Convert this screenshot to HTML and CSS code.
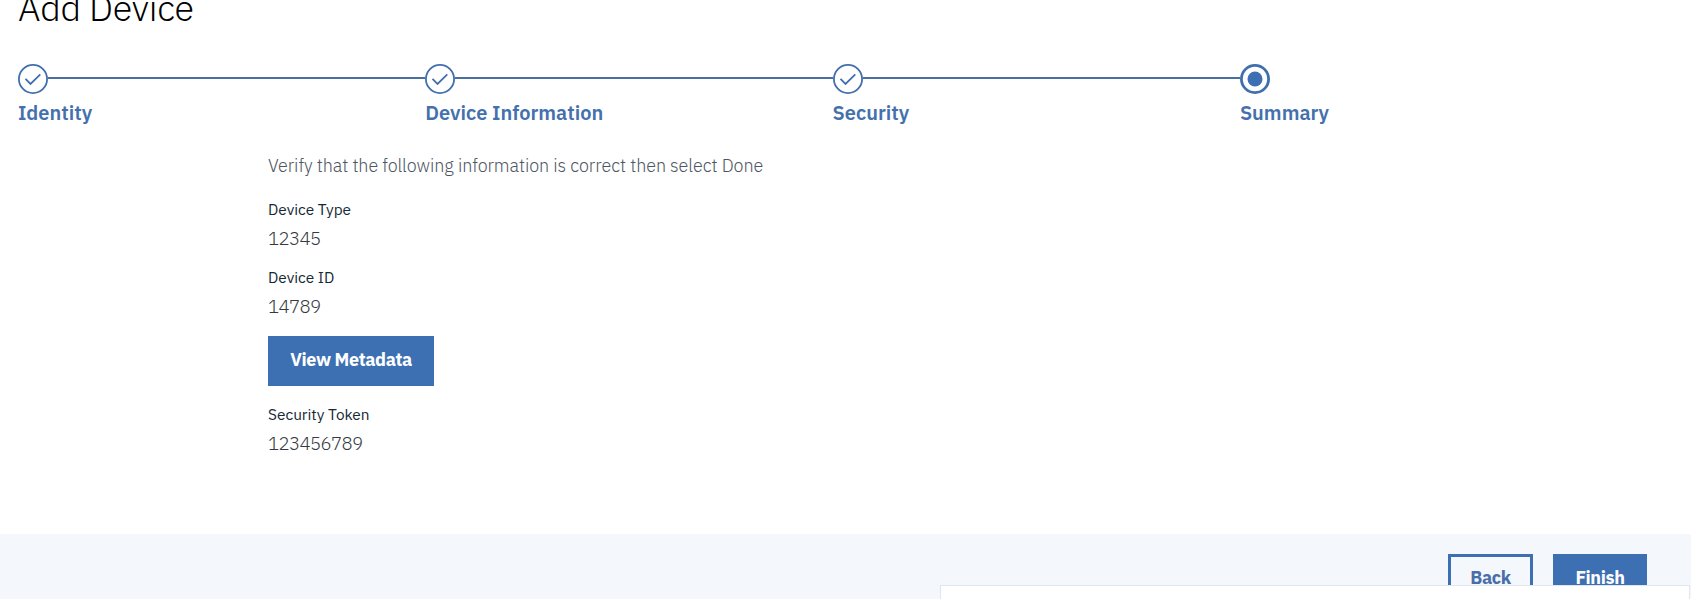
FILE: index.html
```html
<!DOCTYPE html>
<html lang="en">
<head>
<meta charset="utf-8">
<title>Add Device</title>
<link rel="stylesheet" href="styles.css">
</head>
<body>
<div class="page">
  <main class="wizard">
    <h1 class="title">Add Device</h1>
    <ol class="steps">
      <li class="step">
        <div class="track"><svg class="marker" viewBox="0 0 30 30"><circle cx="15" cy="15" r="14.1"/><path d="M7.5 14.9l5 5L22.3 10.400"/></svg></div>
        <span class="step-label">Identity</span>
      </li>
      <li class="step">
        <div class="track"><svg class="marker" viewBox="0 0 30 30"><circle cx="15" cy="15" r="14.1"/><path d="M7.5 14.9l5 5L22.3 10.400"/></svg></div>
        <span class="step-label">Device Information</span>
      </li>
      <li class="step">
        <div class="track"><svg class="marker" viewBox="0 0 30 30"><circle cx="15" cy="15" r="14.1"/><path d="M7.5 14.9l5 5L22.3 10.400"/></svg></div>
        <span class="step-label">Security</span>
      </li>
      <li class="step last">
        <div class="track"><svg class="marker current" viewBox="0 0 30 30"><circle cx="15" cy="15" r="13.6"/><circle class="dot" cx="15" cy="15" r="7.5"/></svg></div>
        <span class="step-label">Summary</span>
      </li>
    </ol>
    <section class="summary">
      <p class="intro">Verify that the following information is correct then select Done</p>
      <div class="field">
        <div class="name">Device Type</div>
        <div class="value">12345</div>
      </div>
      <div class="field">
        <div class="name">Device ID</div>
        <div class="value">14789</div>
      </div>
      <button class="btn primary metadata">View Metadata</button>
      <div class="field">
        <div class="name">Security Token</div>
        <div class="value">123456789</div>
      </div>
    </section>
  </main>
  <footer class="footer">
    <button class="btn secondary back">Back</button>
    <button class="btn primary finish">Finish</button>
  </footer>
  <div class="panel"></div>
</div>
</body>
</html>
```
FILE: styles.css
```css
* { box-sizing: border-box; margin: 0; padding: 0; }
body { font-family: "IBM Plex Sans", Roboto, "Noto Sans", sans-serif; background: #fff; color: #152935; overflow: hidden; }
.page { position: relative; height: 599px; overflow: hidden; display: flex; flex-direction: column; }
.wizard { height: 534px; flex: none; padding-left: 18px; }
.title { margin-top: -14px; font-size: 36px; line-height: 44px; font-weight: 300; color: #000; white-space: nowrap; letter-spacing: -0.3px; }
.steps { display: flex; list-style: none; margin-top: 34px; }
.step { width: 407.3px; flex: none; display: flex; flex-direction: column; }
.track { display: flex; height: 30px; }
.track::after { content: ""; flex: 1; height: 2px; margin-top: 13px; background: #4870a5; }
.last .track::after { display: none; }
.marker { width: 30px; height: 30px; flex: none; fill: none; stroke: #416fae; stroke-width: 1.8; }
.marker.current { stroke-width: 2.8; }
.marker .dot { fill: #3d70b2; stroke: none; }
.step-label { margin-top: 6px; align-self: flex-start; font-size: 20px; line-height: 26px; font-weight: 600; color: #4471ad; white-space: nowrap; }
.summary { padding: 28px 0 0 250px; }
.intro { font-size: 18px; line-height: 24px; font-weight: 300; color: #4d5661; margin-bottom: 21px; white-space: nowrap; letter-spacing: -0.08px; }
.field { height: 51px; margin-bottom: 17px; }
.name { font-size: 15.4px; line-height: 20px; margin-bottom: 5px; color: #152935; }
.value { padding-top: 1px; font-size: 18.6px; line-height: 26px; font-weight: 300; color: #353a42; letter-spacing: -0.66px; }
.btn { display: flex; justify-content: center; height: 50px; padding-top: 2px; font-family: inherit; font-size: 18px; line-height: 44px; font-weight: 700; border: 0; white-space: nowrap; letter-spacing: -0.38px; }
.primary { background: #3d70b2; color: #fff; }
.secondary { border: 3px solid #3d70b2; background: transparent; color: #486fa8; padding-top: 0; line-height: 42px; }
.metadata { width: 166px; margin: 18px 0; }
.footer { height: 65px; flex: none; background: #f4f7fb; display: flex; justify-content: flex-end; gap: 20px; padding: 20px 44px 0 0; }
.back { width: 85px; }
.finish { width: 94px; }
.panel { position: absolute; left: 940px; top: 585px; width: 750px; height: 20px; background: #fff; border: 1px solid #dfe6ed; }
```
